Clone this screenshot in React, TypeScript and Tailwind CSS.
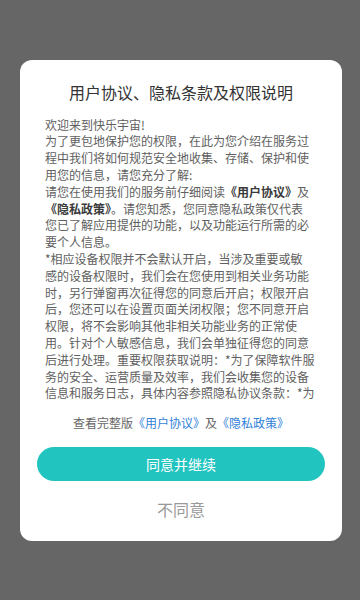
import React from "react";

const lines: React.ReactNode[] = [
  "欢迎来到快乐宇宙!",
  "为了更包地保护您的权限，在此为您介绍在服务过",
  "程中我们将如何规范安全地收集、存储、保护和使",
  "用您的信息，请您充分了解:",
  <>请您在使用我们的服务前仔细阅读<b className="font-bold text-[#3a3a3a]">《用户协议》</b>及</>,
  <><b className="font-bold text-[#3a3a3a]">《隐私政策》</b>。请您知悉，您同意隐私政策仅代表</>,
  "您已了解应用提供的功能，以及功能运行所需的必",
  "要个人信息。",
  "*相应设备权限并不会默认开启，当涉及重要或敏",
  "感的设备权限时，我们会在您使用到相关业务功能",
  "时，另行弹窗再次征得您的同意后开启；权限开启",
  "后，您还可以在设置页面关闭权限；您不同意开启",
  "权限，将不会影响其他非相关功能业务的正常使",
  "用。针对个人敏感信息，我们会单独征得您的同意",
  "后进行处理。重要权限获取说明：*为了保障软件服",
  "务的安全、运营质量及效率，我们会收集您的设备",
  "信息和服务日志，具体内容参照隐私协议条款：*为",
];

export default function App() {
  return (
    <div
      className="w-[360px] h-[600px] bg-[#676667] pt-[60px] overflow-hidden"
      style={{ fontFamily: '"Noto Sans CJK SC", "Noto Sans", sans-serif' }}
    >
      <div className="ml-[20px] w-[322px] bg-white rounded-[12px] flex flex-col items-stretch">
        <div className="pt-[21px] text-center text-[16px] leading-[22px] text-[#333]">
          用户协议、隐私条款及权限说明
        </div>
        <div className="mt-[13.6px] mx-[25px] h-[283.4px] overflow-hidden">
          <p className="text-[12px] leading-[16.8px] text-[#606060] whitespace-nowrap">
            {lines.map((l, i) => (
              <React.Fragment key={i}>
                {l}
                <br />
              </React.Fragment>
            ))}
          </p>
        </div>
        <div className="mt-[14px] text-center text-[12px] leading-[18px] text-[#666]">
          查看完整版<span className="text-[#2f7fd8]">《用户协议》</span>及<span className="text-[#2f7fd8]">《隐私政策》</span>
        </div>
        <button className="mt-[15px] mx-[17px] h-[34px] rounded-full bg-[#22c4bf] text-white text-[14px] leading-[34px] text-center">
          同意并继续
        </button>
        <div className="mt-[17px] pb-[21px] text-center text-[16px] leading-[22px] text-[#999]">
          不同意
        </div>
      </div>
    </div>
  );
}
